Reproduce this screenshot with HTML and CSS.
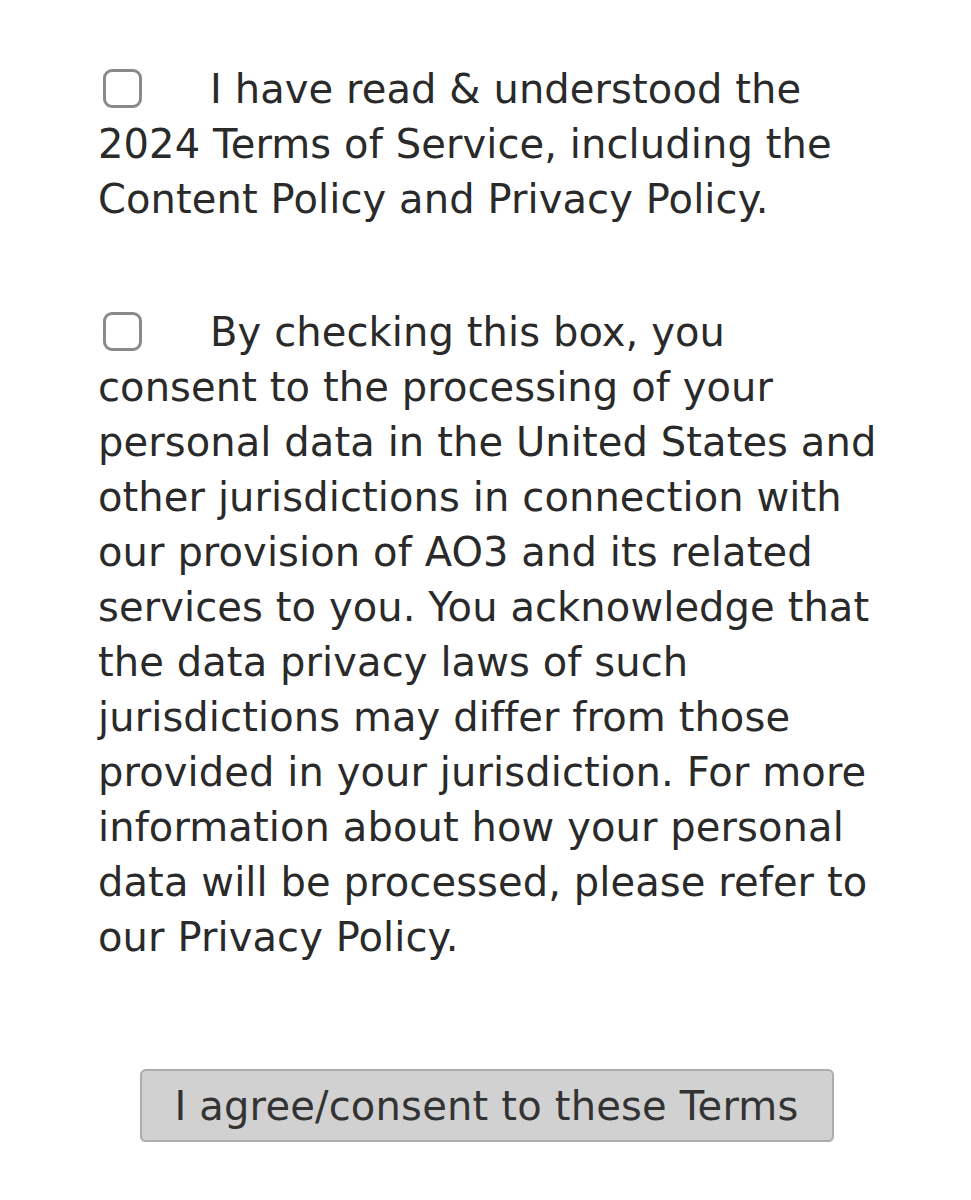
FILE: index.html
```html
<!DOCTYPE html>
<html lang="en">
<head>
<meta charset="utf-8">
<title>Terms</title>
<link rel="stylesheet" href="styles.css">
</head>
<body>
<main class="terms">
  <label class="item item-first">
    <span class="box"></span>I have read &amp; understood the 2024 Terms of Service, including the Content Policy and Privacy Policy.
  </label>
  <label class="item item-second">
    <span class="box"></span>By checking this box, you consent to the processing of your personal data in the United States and other jurisdictions in connection with our provision of AO3 and its related services to you. You acknowledge that the data privacy laws of such jurisdictions may differ from those provided in your jurisdiction. For more information about how your personal data will be processed, please refer to our Privacy Policy.
  </label>
  <div class="actions">
    <button class="agree" type="button">I agree/consent to these Terms</button>
  </div>
</main>
</body>
</html>
```
FILE: styles.css
```css
html, body {
  margin: 0;
  padding: 0;
  background: #ffffff;
}
.terms {
  width: 782px;
  padding: 62px 0 0 98px;
  font-family: "DejaVu Sans", Verdana, sans-serif;
  font-size: 40px;
  letter-spacing: 0.1px;
  line-height: 55px;
  color: #2a2a2a;
}
.item {
  display: block;
}
.item-second {
  margin-top: 78px;
}
.box {
  display: inline-block;
  box-sizing: border-box;
  width: 39px;
  height: 39px;
  border: 3px solid #8a8a8a;
  border-radius: 9px;
  margin-left: 5px;
  margin-right: 68px;
  vertical-align: -5px;
  background: #fff;
}
.actions {
  display: flex;
  justify-content: center;
  margin-top: 104px;
}
.agree {
  box-sizing: border-box;
  width: 694px;
  height: 73px;
  margin-left: -5px;
  background: #d1d1d1;
  border: 2px solid #acacac;
  border-radius: 6px;
  box-shadow: 0 1px 1px rgba(0, 0, 0, 0.15);
  font-family: "DejaVu Sans", Verdana, sans-serif;
  font-size: 40px;
  letter-spacing: 0.2px;
  color: #333333;
  padding: 0;
}
```
